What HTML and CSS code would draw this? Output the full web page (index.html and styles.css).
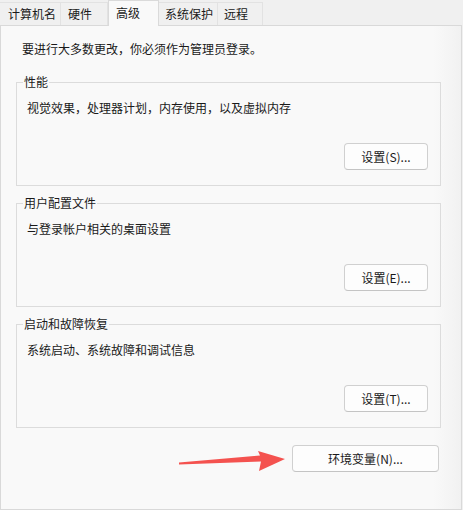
FILE: index.html
```html
<!DOCTYPE html>
<html lang="zh-CN">
<head>
    <title>系统属性 - 高级</title>
    <meta charset="UTF-8">
    <meta name="viewport" content="width=device-width, initial-scale=1.0">
    <link rel="stylesheet" href="styles.css">
</head>
<body>
    <div class="dialog">
        <div class="tabs">
            <div class="tab tab-name">计算机名</div>
            <div class="tab tab-hw">硬件</div>
            <div class="tab tab-adv active">高级</div>
            <div class="tab tab-protect">系统保护</div>
            <div class="tab tab-remote">远程</div>
        </div>
        <div class="panel">
            <p class="note">要进行大多数更改，你必须作为管理员登录。</p>

            <fieldset class="group">
                <legend>性能</legend>
                <p class="desc">视觉效果，处理器计划，内存使用，以及虚拟内存</p>
                <div class="actions"><button type="button">设置(S)...</button></div>
            </fieldset>

            <fieldset class="group">
                <legend>用户配置文件</legend>
                <p class="desc">与登录帐户相关的桌面设置</p>
                <div class="actions"><button type="button">设置(E)...</button></div>
            </fieldset>

            <fieldset class="group">
                <legend>启动和故障恢复</legend>
                <p class="desc">系统启动、系统故障和调试信息</p>
                <div class="actions"><button type="button">设置(T)...</button></div>
            </fieldset>

            <div class="bottom">
                <button type="button" class="env-btn">环境变量(N)...</button>
            </div>
        </div>

        <!-- 标注箭头 -->
        <svg class="arrow" width="115" height="30" viewBox="175 446 115 30">
            <polygon fill="#f4524f" points="179,462.6 260,455.6 258,451 285,459 259,471 261,461.4 179,464.6"/>
        </svg>
    </div>
</body>
</html>
```

FILE: styles.css
```css
body {
    margin: 0;
    background-color: #f0f0f0;
    font-family: "Noto Sans CJK SC", "Noto Sans", sans-serif;
    font-size: 12px;
    line-height: 16px;
    color: #1a1a1a;
}
.dialog {
    position: relative;
    width: 463px;
    height: 510px;
}
.tabs {
    display: flex;
    align-items: flex-end;
    height: 25px;
}
.tab {
    box-sizing: border-box;
    height: 23px;
    padding: 3px 0 0 7px;
    background-color: #f0f0f0;
    border: 1px solid #e2e2e2;
    border-bottom: none;
    border-left: none;
}
.tab-name { width: 61px; padding-left: 8px; }
.tab-hw { width: 47px; }
.tab-adv { width: 51px; }
.tab-protect { width: 59px; padding-left: 6px; }
.tab-remote { width: 45px; padding-left: 6px; }
.tab.active {
    height: 26px;
    margin-bottom: -1px;
    padding-top: 4px;
    background-color: #f9f9f9;
    border: 1px solid #dadada;
    border-bottom: none;
    position: relative;
    z-index: 1;
}
.panel {
    box-sizing: border-box;
    width: 462px;
    height: 485px;
    padding: 15px 20px 0 15px;
    background: linear-gradient(to right, #f9f9f9 94%, #f1f1f1);
    border: 1px solid #d9d9d9;
}
.note {
    margin: 0 0 17px 6px;
}
.group {
    margin: 0 0 9px 0;
    padding: 0 12px 14px 10px;
    border: 1px solid #dcdcdc;
    height: 112px;
    box-sizing: border-box;
}
.group legend {
    margin-left: -4px;
    padding: 0 1px;
}
.desc {
    margin: 10px 0 0 0;
}
.actions {
    display: flex;
    justify-content: flex-end;
    margin-top: 27px;
}
button {
    box-sizing: border-box;
    height: 27px;
    width: 84px;
    padding: 0;
    font-family: inherit;
    font-size: 12px;
    color: #1a1a1a;
    background-color: #fdfdfd;
    border: 1px solid #d0d0d0;
    border-bottom-color: #c4c4c4;
    border-radius: 4px;
}
.bottom {
    display: flex;
    justify-content: flex-end;
    margin-top: 17px;
    padding-right: 2px;
}
.env-btn {
    width: 147px;
}
.arrow {
    position: absolute;
    left: 175px;
    top: 446px;
}
```
